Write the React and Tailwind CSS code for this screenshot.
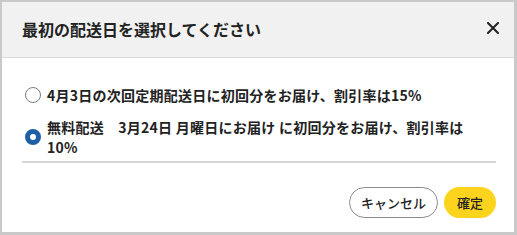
import React, { useState } from 'react';

const font = { fontFamily: '"Noto Sans CJK JP", "Noto Sans", sans-serif' };

const options = [
  { id: 'next', label: '4月3日の次回定期配送日に初回分をお届け、割引率は15%' },
  { id: 'free', label: '無料配送　3月24日 月曜日にお届け に初回分をお届け、割引率は10%' },
];

const Radio = ({ checked }) =>
  checked ? (
    <span className="w-4 h-4 shrink-0 rounded-full border-[5px] border-[#1f5fa6] bg-white" />
  ) : (
    <span className="w-4 h-4 shrink-0 rounded-full border border-[#7a7a7a] bg-white" />
  );

export default function App() {
  const [selected, setSelected] = useState('free');

  return (
    <div
      className="w-[517px] h-[235px] bg-white border-l-2 border-t-2 border-r-[3px] border-b-[3px] border-[#c9c9c9] flex flex-col text-[#222]"
      style={font}
    >
      {/* Header */}
      <div className="h-[56px] shrink-0 bg-[#f0f1f0] border-b border-[#d9d9d9] flex items-center justify-between pl-5 pr-[15px]">
        <h1 className="text-[16px] font-bold leading-none -mt-[2px]">最初の配送日を選択してください</h1>
        <button className="w-3 h-3 flex items-center justify-center -mt-[4px]">
          <svg width="12" height="12" viewBox="0 0 12 12" fill="none">
            <path d="M1 1L11 11M11 1L1 11" stroke="#222" strokeWidth="2" strokeLinecap="square" />
          </svg>
        </button>
      </div>

      {/* Options */}
      <div className="pl-5 pr-[18px] pt-[27px] flex flex-col">
        <div className="flex flex-col gap-[12px]">
          {options.map((o) => (
            <label
              key={o.id}
              onClick={() => setSelected(o.id)}
              className="flex items-center gap-[6px] pl-[3px] cursor-pointer"
            >
              <Radio checked={selected === o.id} />
              <span className="text-[14px] font-bold tracking-[0.25px] leading-[20px] max-w-[430px]">{o.label}</span>
            </label>
          ))}
        </div>
        <div className="h-[2px] bg-[#d6d6d6] mt-[4px]" />

        {/* Buttons */}
        <div className="flex justify-end gap-[6px] mt-[24px]">
          <button className="h-[31px] w-[89px] rounded-full border border-[#8a8a8a] bg-white text-[13px] font-medium">
            キャンセル
          </button>
          <button className="h-[31px] w-[52px] rounded-full bg-[#fdd41d] text-[13px] font-medium">
            確定
          </button>
        </div>
      </div>
    </div>
  );
}
